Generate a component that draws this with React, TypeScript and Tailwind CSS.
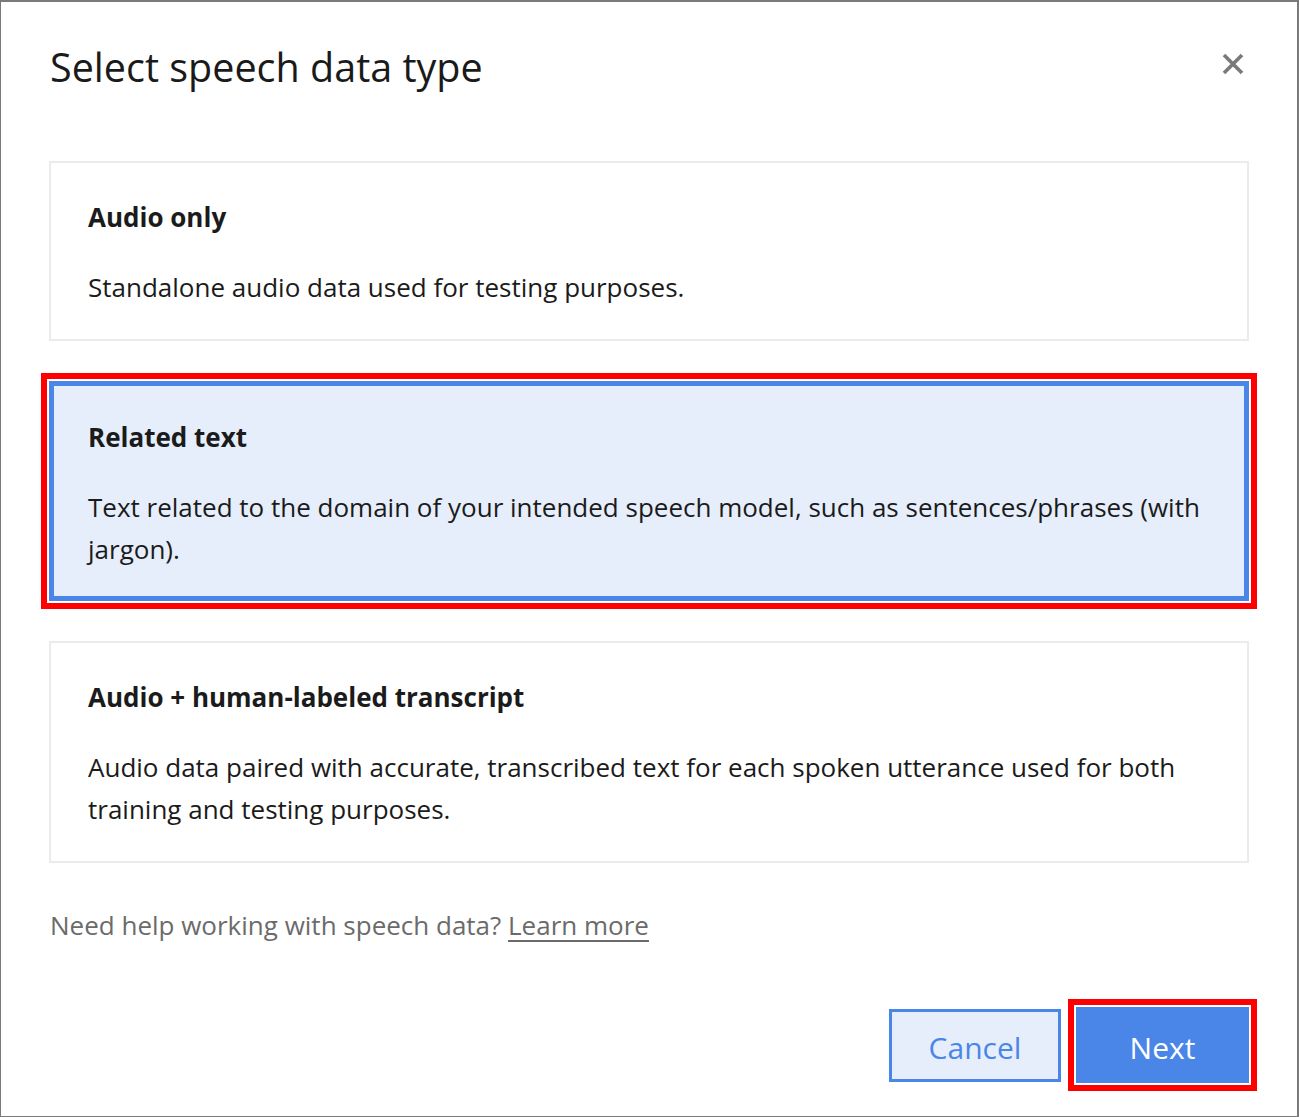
import React from "react";

const cards = [
  {
    title: "Audio only",
    desc: "Standalone audio data used for testing purposes.",
    selected: false,
  },
  {
    title: "Related text",
    desc: "Text related to the domain of your intended speech model, such as sentences/phrases (with jargon).",
    selected: true,
  },
  {
    title: "Audio + human-labeled transcript",
    desc: "Audio data paired with accurate, transcribed text for each spoken utterance used for both training and testing purposes.",
    selected: false,
  },
];

export default function App() {
  return (
    <div className="w-[1299px] h-[1117px] bg-white border-t-2 border-l border-r-2 border-b border-[#7a7a7a] font-['Open_Sans','Noto_Sans',sans-serif] text-[#1b1b1b]">
      <div className="flex items-start justify-between pl-[49px] pr-[53px] pt-[39px]">
        <h1 className="text-[39.5px] leading-[52px] font-normal text-[#1a1a1a]">
          Select speech data type
        </h1>
        <svg width="22" height="22" viewBox="0 0 22 22" className="mt-[12px]">
          <path d="M2 2 L20 20 M20 2 L2 20" stroke="#7a7a7a" strokeWidth="3.6" strokeLinecap="butt" />
        </svg>
      </div>

      <div className="flex flex-col gap-[40px] px-[48px] mt-[68px]">
        {cards.map((c) =>
          c.selected ? (
            <div
              key={c.title}
              className="border-[5px] border-[#4a86e8] bg-[#e6eefb] px-[34px] pt-[33px] pb-[26px] outline-[6px] outline-solid outline-[#ff0000] outline-offset-[2px]"
            >
              <div className="text-[26px] leading-[36px] font-bold">{c.title}</div>
              <div className="mt-[31px] text-[26px] leading-[42px]">{c.desc}</div>
            </div>
          ) : (
            <div
              key={c.title}
              className="border-2 border-[#ebebeb] bg-white px-[37px] pt-[36px] pb-[31px]"
            >
              <div className="text-[26px] leading-[36px] font-bold">{c.title}</div>
              <div className="mt-[31px] text-[26px] leading-[42px]">{c.desc}</div>
            </div>
          )
        )}
      </div>

      <div className="px-[49px] mt-[44px] text-[26px] leading-[36px] text-[#6b6b6b]">
        Need help working with speech data?{" "}
        <span className="underline decoration-[#6b6b6b] underline-offset-[5px]">Learn more</span>
      </div>

      <div className="flex items-center justify-end gap-[15px] pr-[48px] mt-[64px]">
        <button className="w-[172px] h-[73px] border-[3px] border-[#4a86e8] bg-[#e6eefb] text-[#4a86e8] text-[30px] leading-none flex items-center justify-center pt-[5px]">
          Cancel
        </button>
        <button className="w-[173px] h-[76px] bg-[#4a86e8] text-white text-[30px] leading-none flex items-center justify-center pt-[5px] outline-[6px] outline-solid outline-[#ff0000] outline-offset-[2px]">
          Next
        </button>
      </div>
    </div>
  );
}
